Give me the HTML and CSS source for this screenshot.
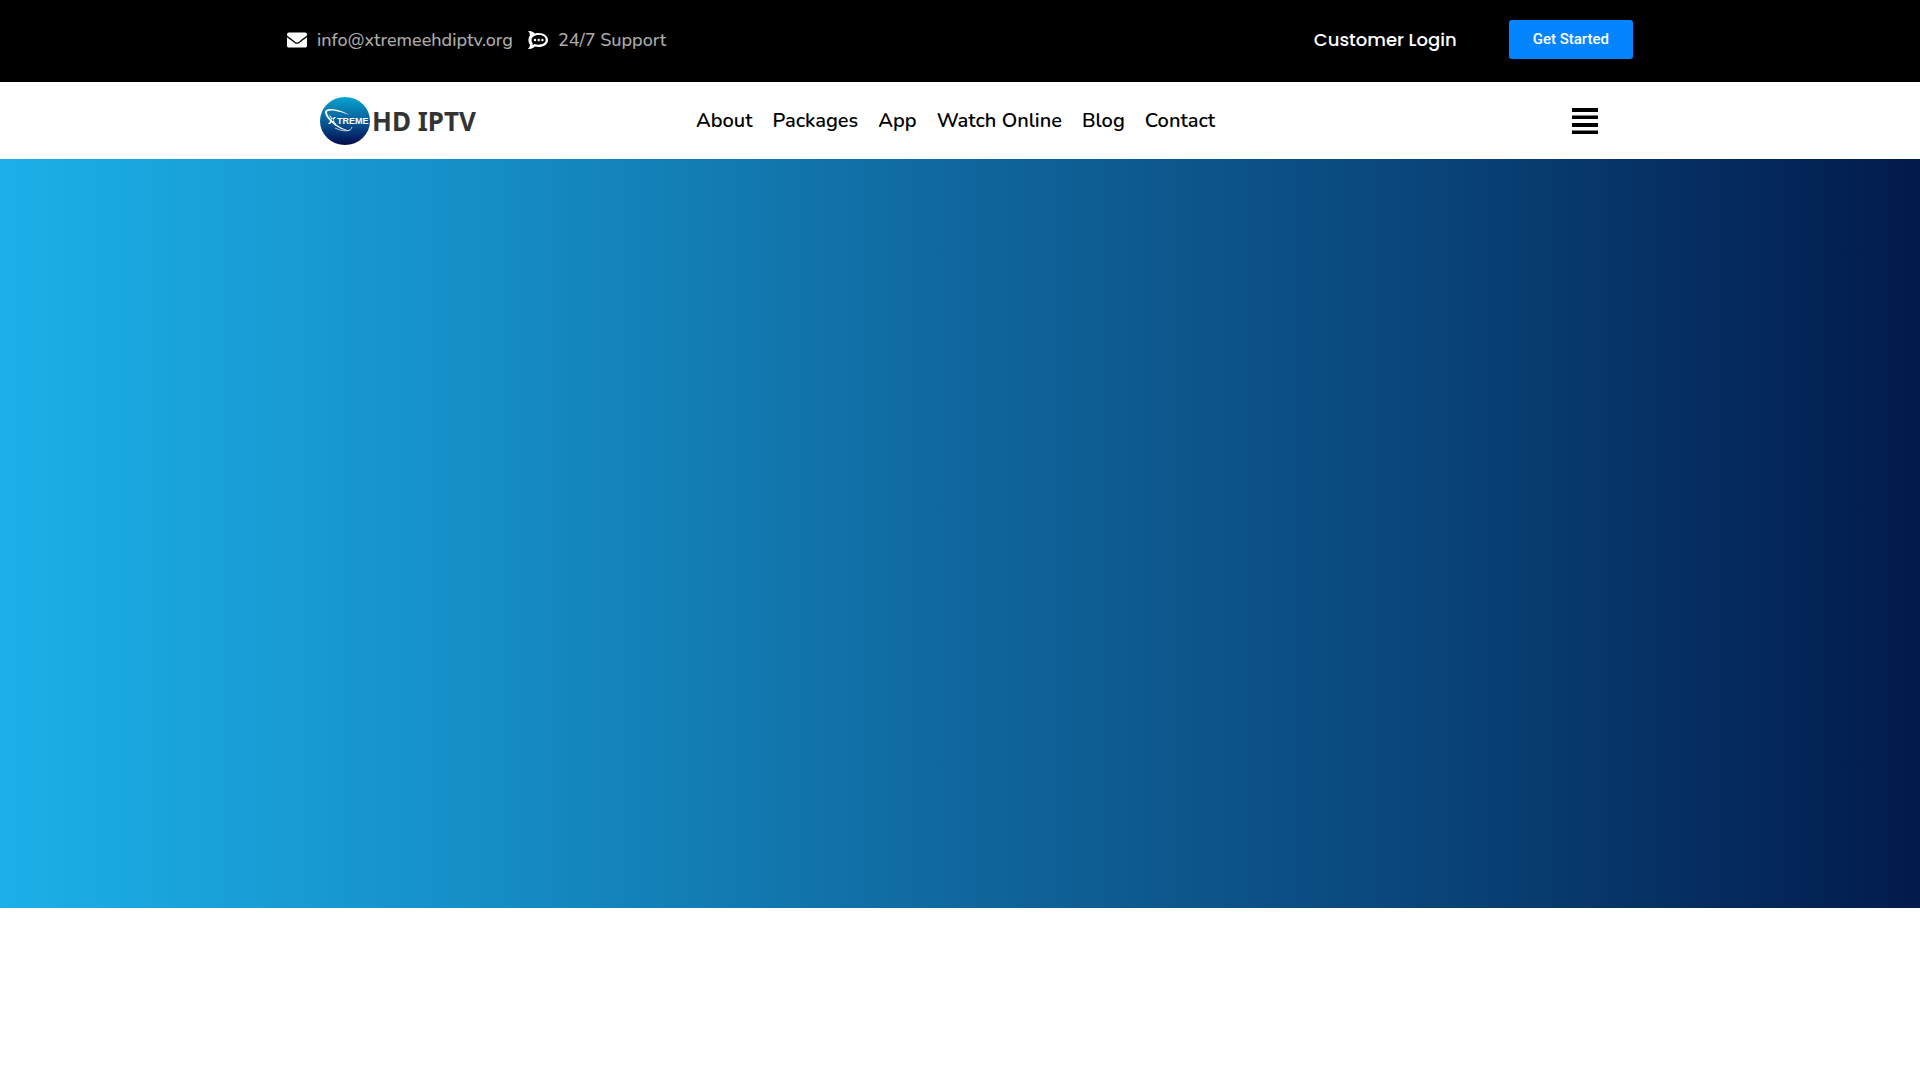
FILE: index.html
```html
<!DOCTYPE html>
<html lang="en">
<head>
<meta charset="utf-8">
<meta name="viewport" content="width=device-width, initial-scale=1">
<title>Xtreme HD IPTV</title>
<link rel="stylesheet" href="styles.css">
</head>
<body>
<div class="topbar">
  <div class="topbar-inner">
    <ul class="contacts">
      <li><a class="contact" href="mailto:info@xtremeehdiptv.org">
        <svg class="contact-icon" viewBox="0 0 512 512" aria-hidden="true"><path d="M502.3 190.8c3.900-3.100 9.700-.2 9.700 4.700V400c0 26.500-21.500 48-48 48H48c-26.500 0-48-21.500-48-48V195.600c0-5 5.700-7.800 9.700-4.700 22.400 17.400 52.100 39.500 154.100 113.600 21.100 15.400 56.700 47.800 92.200 47.600 35.700.3 72-32.800 92.300-47.600 102-74.100 131.600-96.300 154-113.700zM256 320c23.200.4 56.600-29.200 73.400-41.400 132.700-96.300 142.800-104.700 173.400-128.700 5.800-4.500 9.200-11.500 9.200-18.900v-19c0-26.500-21.500-48-48-48H48c-26.500 0-48 21.500-48 48v19c0 7.400 3.400 14.300 9.200 18.900 30.600 23.900 40.700 32.400 173.400 128.700 16.800 12.200 50.200 41.800 73.400 41.400z"/></svg>
        <span>info@xtremeehdiptv.org</span></a></li>
      <li><a class="contact" href="#support">
        <svg class="contact-icon" viewBox="0 0 20 20" aria-hidden="true"><path fill-rule="evenodd" d="M0 1C3 .6 5.300 1.700 6.800 3.400C13.500 1.700 20 4.700 20 10C20 15.300 13.500 18.300 6.800 16.600C5.300 18.300 3 19.400 0 19C1.600 17.600 2 15.800 1.800 14.300C0 12.500 0 7.500 1.800 5.700C2 4.200 1.600 2.400 0 1ZM3.500 10C3.500 12 4.500 13 4.800 13.600L4.400 15.300L6.700 14.100C12 15.700 17.700 13.800 17.700 10C17.700 5.500 12 4.300 7.500 5.500C5 6.200 3.500 8 3.500 10Z"/><circle cx="7" cy="10" r="1.200"/><circle cx="10.700" cy="10" r="1.200"/><circle cx="14.400" cy="10" r="1.200"/></svg>
        <span>24/7 Support</span></a></li>
    </ul>
    <div class="account">
      <a class="login" href="#login">Customer Login</a>
      <button class="cta" type="button">Get Started</button>
    </div>
  </div>
</div>
<header class="header">
  <div class="header-inner">
    <a class="logo" href="#home" aria-label="Xtreme HD IPTV">
      <svg class="logo-mark" viewBox="0 0 50 48" aria-hidden="true">
        <defs><linearGradient id="globe" x1="0" y1="0" x2="0" y2="1"><stop offset="0" stop-color="#08a5cf"/><stop offset=".5" stop-color="#075c99"/><stop offset="1" stop-color="#050a4d"/></linearGradient></defs>
        <ellipse cx="25" cy="24" rx="25" ry="24" fill="url(#globe)"/>
        <path d="M29 18C18 11 4 10 5 16C7 24 21 35 32 34C21 33 9 23 7 16C6 12 17 13 29 18Z" fill="#fff"/>
        <path d="M15 31C23 35 31 35 32 30" fill="none" stroke="#fff" stroke-width=".7"/>
        <path d="M8 17C10 18 11 24 15 27H16C14 25 12 19 8 17ZM14 20H16L10 27H8Z" fill="#fff"/>
        <text class="logo-small" x="17" y="27">TREME</text>
      </svg>
      <span class="logo-text">HD IPTV</span>
    </a>
    <nav class="nav" aria-label="Main">
      <a href="#about">About</a>
      <a href="#packages">Packages</a>
      <a href="#app">App</a>
      <a href="#watch">Watch Online</a>
      <a href="#blog">Blog</a>
      <a href="#contact">Contact</a>
    </nav>
    <button class="menu" type="button" aria-label="Open menu">
      <svg class="menu-icon" viewBox="0 0 26 26" aria-hidden="true"><path d="M0 0h26v4H0zM0 7.500h26v3.500H0zM0 15h26v4H0zM0 22.500h26v3.500H0z"/></svg>
    </button>
  </div>
</header>
<main>
  <section class="hero"></section>
</main>
</body>
</html>
```
FILE: styles.css
```css
* { box-sizing: border-box; }
body { margin: 0; background: #fff; font-family: Nunito, "Noto Sans", sans-serif; }
a { color: inherit; text-decoration: none; }
button { border: 0; padding: 0; cursor: pointer; }

.topbar { background: #000; color: #fff; }
.topbar-inner {
  display: flex;
  justify-content: space-between;
  align-items: center;
  max-width: 1346px;
  margin: 0 auto;
  padding: 20px 0 23px;
}
.contacts { display: flex; gap: 15px; margin: 0; padding: 0; list-style: none; }
.contact { display: flex; align-items: center; gap: 10px; font-size: 18px; font-weight: 500; line-height: 22px; color: #aaa; }
.contact-icon { width: 20px; height: 20px; fill: #fff; }
.account { display: flex; align-items: center; gap: 52px; }
.login { font-family: Poppins, "Open Sans", sans-serif; font-size: 18px; font-weight: 500; line-height: 24px; }
.cta {
  padding: 12px 24px;
  border-radius: 3px;
  background: #0485ff;
  color: #fff;
  font: 500 15px/15px Roboto, sans-serif;
}

.header-inner {
  display: grid;
  grid-template-columns: 376px auto 1fr;
  align-items: center;
  max-width: 1280px;
  min-height: 77px;
  margin: 0 auto;
  padding-right: 2px;
}
.logo { display: flex; align-items: center; gap: 2px; }
.logo-mark { width: 50px; height: 48px; }
.logo-small { font: bold 9px "Liberation Sans", sans-serif; fill: #fff; }
.logo-text { font: bold 26px/32px "Noto Sans", sans-serif; color: #333; }
.nav { display: flex; gap: 20px; font-size: 20px; font-weight: 600; line-height: 24px; color: #000; }
.menu { justify-self: end; display: flex; background: none; }
.menu-icon { width: 26px; height: 26px; }

.hero {
  min-height: 749px;
  background: linear-gradient(90deg, #1cb0e8 0%, #1485bd 31%, #0f649a 52%, #094277 76%, #021a4c 100%);
}
```
